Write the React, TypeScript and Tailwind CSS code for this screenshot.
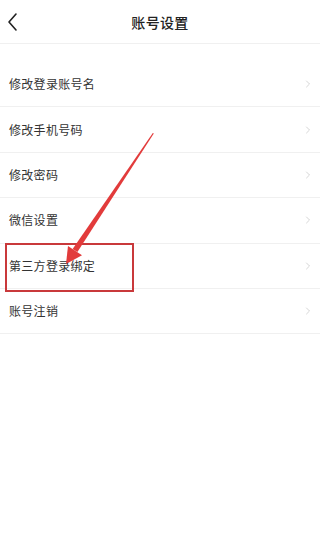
import { ChevronRight } from "lucide-react";

const items = [
  "修改登录账号名",
  "修改手机号码",
  "修改密码",
  "微信设置",
  "第三方登录绑定",
  "账号注销",
];

export default function App() {
  return (
    <div
      className="relative w-[320px] h-[535px] bg-white overflow-hidden"
      style={{ fontFamily: '"Noto Sans CJK SC", "Noto Sans", sans-serif' }}
    >
      {/* Header */}
      <div className="relative flex items-center justify-center h-[44px] border-b border-[#f0f0f0]">
        <button className="absolute left-[6px] top-[12px] text-[#222]">
          <svg width="14" height="20" viewBox="0 0 14 20" fill="none">
            <path d="M10 2 L3 10 L10 18" stroke="currentColor" strokeWidth="1.6" strokeLinecap="round" strokeLinejoin="round" />
          </svg>
        </button>
        <h1 className="text-[14px] font-medium text-[#222] tracking-wide mt-[1px]">账号设置</h1>
      </div>

      {/* List */}
      <div className="mt-[18px]">
        {items.map((label) => (
          <div
            key={label}
            className="flex items-center justify-between h-[45.4px] pl-[9px] pr-[6px] border-b border-[#f0f0f0]"
          >
            <span className="text-[12px] text-[#333] tracking-[0.3px]">{label}</span>
            <ChevronRight className="w-[12px] h-[12px] text-[#c4c4c4]" strokeWidth={1.4} />
          </div>
        ))}
      </div>

      {/* Annotation: red box */}
      <div className="absolute left-[5px] top-[243px] w-[129px] h-[49px] border-2 border-[#c9393b]" />

      {/* Annotation: red arrow */}
      <svg className="absolute inset-0 pointer-events-none" width="320" height="535" viewBox="0 0 320 535">
        <polygon points="152.8,133 153.8,133.6 77.4,252.1 72.6,249" fill="#e23b3b" />
        <polygon points="66,264 68,246 82,255.3" fill="#e23b3b" />
      </svg>
    </div>
  );
}
